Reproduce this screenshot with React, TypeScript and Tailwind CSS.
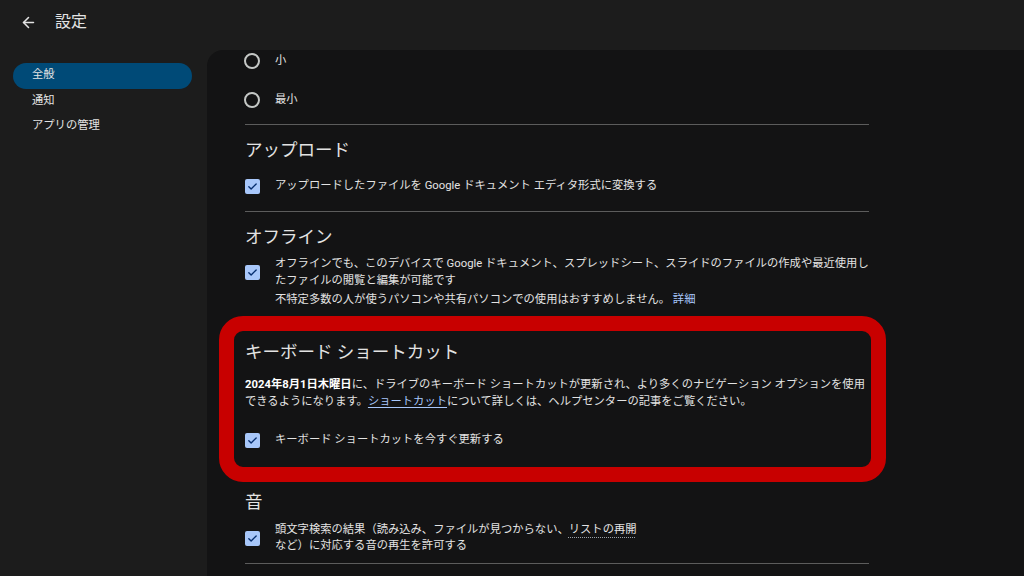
import { ArrowLeft } from "lucide-react";

const font = { fontFamily: "Roboto, 'Noto Sans CJK JP', sans-serif" };

function Check() {
  return (
    <span className="w-[15px] h-[15px] shrink-0 rounded-[2px] bg-[#a8c7fa] flex items-center justify-center">
      <svg width="11" height="11" viewBox="0 0 24 24" fill="none" stroke="#062e6f" strokeWidth="3" strokeLinecap="round" strokeLinejoin="round">
        <path d="M4 12.5l5 5L20 6.5" />
      </svg>
    </span>
  );
}

function Radio({ label }: { label: string }) {
  return (
    <div className="flex items-center h-[22px] gap-[15px] -ml-px">
      <span className="w-[16px] h-[16px] rounded-full border-2 border-[#c4c7c5]" />
      <span className="text-[11.3px] text-[#e3e3e3]">{label}</span>
    </div>
  );
}

const Divider = ({ cls }: { cls: string }) => <div className={`h-px bg-[#5c5c5c] ${cls}`} />;

const navItems = ["全般", "通知", "アプリの管理"];

export default function App() {
  return (
    <div className="w-[1024px] h-[576px] bg-[#1c1c1c] text-[#e3e3e3] overflow-hidden flex flex-col" style={font}>
      <header className="h-[45px] flex items-center pl-[20px] shrink-0">
        <ArrowLeft size={17} strokeWidth={2.2} className="text-[#e3e3e3] mt-[-1px]" />
        <span className="ml-[18px] text-[16px] mb-[2px]">設定</span>
      </header>
      <div className="flex flex-1 min-h-0">
        <nav className="w-[207px] shrink-0 pt-[18px] pl-[13px] pr-[15px]">
          {navItems.map((item, i) => (
            <div
              key={item}
              className={`h-[25.5px] flex items-center pl-[19px] text-[11.3px] rounded-full ${i === 0 ? "bg-[#004a77] text-[#e3e3e3]" : "text-[#e3e3e3]"}`}
            >
              {item}
            </div>
          ))}
        </nav>
        <main className="flex-1 mt-[5px] bg-[#131314] rounded-tl-[16px] pl-[38px] overflow-hidden">
          <div className="w-[624px] text-[11.3px] text-[#e3e3e3]">
            <Radio label="小" />
            <div className="mt-[17px]">
              <Radio label="最小" />
            </div>
            <Divider cls="mt-[13px]" />

            <h2 className="mt-[13px] text-[17.5px] leading-[24px] text-[#e3e3e3]">アップロード</h2>
            <div className="mt-[14px] h-[20px] flex items-center gap-[15px]">
              <Check />
              <span>アップロードしたファイルを Google ドキュメント エディタ形式に変換する</span>
            </div>
            <Divider cls="mt-[15px]" />

            <h2 className="mt-[13px] text-[17.5px] leading-[24px]">オフライン</h2>
            <div className="mt-[6px] flex items-center gap-[15px]">
              <Check />
              <p className="leading-[17px] whitespace-nowrap">
                オフラインでも、このデバイスで Google ドキュメント、スプレッドシート、スライドのファイルの作成や最近使用し
                <br />
                たファイルの閲覧と編集が可能です
              </p>
            </div>
            <p className="mt-[2px] ml-[30px] leading-[17px]">
              不特定多数の人が使うパソコンや共有パソコンでの使用はおすすめしません。 <span className="text-[#a8c7fa]">詳細</span>
            </p>

            <section className="mt-[8px] -ml-[26px] w-[667px] border-[15px] border-[#c80000] rounded-[24px] pl-[11px] pt-[9px] pb-[17px]">
              <h2 className="text-[17.5px] leading-[24px]">キーボード ショートカット</h2>
              <p className="mt-[12px] leading-[17px] whitespace-nowrap">
                <span className="font-bold text-white">2024年8月1日木曜日</span>に、ドライブのキーボード ショートカットが更新され、より多くのナビゲーション オプションを使用
                <br />
                できるようになります。<span className="text-[#a8c7fa] underline underline-offset-2">ショートカット</span>について詳しくは、ヘルプセンターの記事をご覧ください。
              </p>
              <div className="mt-[20px] h-[20px] flex items-center gap-[15px]">
                <Check />
                <span>キーボード ショートカットを今すぐ更新する</span>
              </div>
            </section>

            <h2 className="mt-[8px] text-[17.5px] leading-[24px]">音</h2>
            <div className="mt-[8px] flex items-center gap-[15px]">
              <Check />
              <p className="leading-[16px] whitespace-nowrap">
                頭文字検索の結果（読み込み、ファイルが見つからない、
                <span className="underline decoration-dotted underline-offset-4 decoration-[#9aa0a6]">リストの再開</span>
                <br />
                など）に対応する音の再生を許可する
              </p>
            </div>
            <Divider cls="mt-[9px]" />
          </div>
        </main>
      </div>
    </div>
  );
}
